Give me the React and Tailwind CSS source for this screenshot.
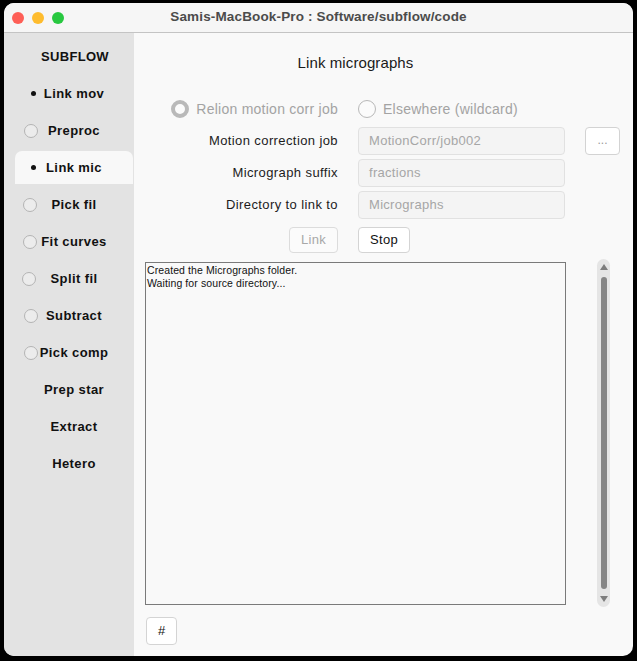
import React from "react";

const items = [
  { label: "Link mov", ind: "dot" },
  { label: "Preproc", ind: "circle" },
  { label: "Link mic", ind: "dot", active: true },
  { label: "Pick fil", ind: "circle", off: -1 },
  { label: "Fit curves", ind: "circle", off: -1 },
  { label: "Split fil", ind: "circle", off: -2 },
  { label: "Subtract", ind: "circle" },
  { label: "Pick comp", ind: "circle" },
  { label: "Prep star" },
  { label: "Extract" },
  { label: "Hetero" },
];

function Indicator({ ind, off }) {
  if (ind === "dot")
    return <span className="ml-[16px] block w-[5px] h-[5px] rounded-full bg-[#111]" />;
  if (ind === "circle")
    return (
      <span
        className={
          "block w-[14px] h-[14px] rounded-full border border-[#b4b4b4] bg-[#ececec] " +
          (off === -1 ? "ml-[8px]" : off === -2 ? "ml-[7px]" : "ml-[9px]")
        }
      />
    );
  return null;
}

export default function App() {
  const font = { fontFamily: '"Liberation Sans", Arial, sans-serif' };
  return (
    <div className="w-[637px] h-[661px] bg-black pt-[3px] pl-[4px] pr-[4px] pb-[5px]" style={font}>
      <div className="w-full h-full rounded-[10px] overflow-hidden flex flex-col bg-[#f9f9f9]">
        {/* title bar */}
        <div className="h-[30px] shrink-0 bg-[#f6f6f6] border-b border-[#c4c4c4] flex items-center">
          <div className="flex items-center gap-[8px] pl-[8px] w-[60px]">
            <span className="w-[12px] h-[12px] rounded-full bg-[#fe5f57]" />
            <span className="w-[12px] h-[12px] rounded-full bg-[#febc2e]" />
            <span className="w-[12px] h-[12px] rounded-full bg-[#28c840]" />
          </div>
          <div className="flex-1 text-center text-[13.5px] tracking-[0.15px] font-bold text-[#4b4b4b] pr-[60px]">
            Samis-MacBook-Pro : Software/subflow/code
          </div>
        </div>

        <div className="flex flex-1 min-h-0">
          {/* sidebar */}
          <div className="w-[130px] shrink-0 bg-[#e3e3e3] pt-[7px] pl-[11px] flex flex-col gap-[4px]">
            <div className="w-[118px] h-[33px] flex items-center justify-center text-[13px] tracking-[0.3px] font-bold text-[#111] pl-[2px]">
              SUBFLOW
            </div>
            {items.map((it) => (
              <div
                key={it.label}
                className={
                  "w-[118px] h-[33px] grid grid-cols-[24px_1fr_24px] items-center " +
                  (it.active ? "bg-[#f8f8f8] rounded-t-[7px]" : "")
                }
              >
                <div className="flex items-center">
                  <Indicator ind={it.ind} off={it.off} />
                </div>
                <div className="text-center text-[13px] tracking-[0.4px] font-bold text-[#111] whitespace-nowrap">
                  {it.label}
                </div>
                <div />
              </div>
            ))}
          </div>

          {/* main */}
          <div className="flex-1 flex flex-col pt-[20px]">
            <div className="w-[443px] text-center text-[15px] tracking-[0.1px] leading-[20px] text-[#1a1a1a]">
              Link micrographs
            </div>

            <div className="grid grid-cols-[204px_207px_35px] gap-x-[20px] mt-[27px]">
              {/* radio row */}
              <div className="flex items-center justify-end h-[18px] gap-[7px]">
                <span className="w-[18px] h-[18px] rounded-full border-[4px] border-[#b9b9b9] bg-[#fbfbfb]" />
                <span className="text-[14px] tracking-[0.25px] text-[#a3a3a3] whitespace-nowrap">Relion motion corr job</span>
              </div>
              <div className="flex items-center h-[18px] gap-[7px]">
                <span className="w-[18px] h-[18px] rounded-full border border-[#b8b8b8] bg-[#fbfbfb]" />
                <span className="text-[14px] tracking-[0.25px] text-[#a3a3a3] whitespace-nowrap">Elsewhere (wildcard)</span>
              </div>
              <div />

              {/* inputs */}
              <div className="mt-[9px] h-[28px] flex items-center justify-end text-[13px] tracking-[0.4px] text-[#1c1c1c] whitespace-nowrap">
                Motion correction job
              </div>
              <div className="mt-[9px] h-[28px] rounded-[4px] border border-[#e1e1e1] bg-[#f4f4f4] flex items-center pl-[10px] text-[13px] tracking-[0.3px] text-[#a6a6a6]">
                MotionCorr/job002
              </div>
              <div className="mt-[9px] h-[28px] rounded-[4px] border border-[#d3d3d3] bg-white flex items-center justify-center text-[12px] text-[#9a9a9a] pb-[3px]">
                ...
              </div>

              <div className="mt-[4px] h-[28px] flex items-center justify-end text-[13px] tracking-[0.4px] text-[#1c1c1c] whitespace-nowrap">
                Micrograph suffix
              </div>
              <div className="mt-[4px] h-[28px] rounded-[4px] border border-[#e1e1e1] bg-[#f4f4f4] flex items-center pl-[10px] text-[13px] tracking-[0.3px] text-[#a6a6a6]">
                fractions
              </div>
              <div />

              <div className="mt-[4px] h-[28px] flex items-center justify-end text-[13px] tracking-[0.4px] text-[#1c1c1c] whitespace-nowrap">
                Directory to link to
              </div>
              <div className="mt-[4px] h-[28px] rounded-[4px] border border-[#e1e1e1] bg-[#f4f4f4] flex items-center pl-[10px] text-[13px] tracking-[0.3px] text-[#a6a6a6]">
                Micrographs
              </div>
              <div />

              {/* buttons */}
              <div className="mt-[8px] h-[26px] flex justify-end">
                <div className="w-[49px] h-[26px] rounded-[4px] border border-[#dcdcdc] bg-[#fbfbfb] flex items-center justify-center text-[13px] tracking-[0.3px] text-[#a8a8a8]">
                  Link
                </div>
              </div>
              <div className="mt-[8px] h-[26px] flex">
                <div className="w-[52px] h-[26px] rounded-[4px] border border-[#d4d4d4] bg-white flex items-center justify-center text-[13px] tracking-[0.3px] text-[#111]">
                  Stop
                </div>
              </div>
              <div />
            </div>

            {/* log area */}
            <div className="flex mt-[9px] pl-[11px]">
              <div className="w-[421px] h-[343px] border border-[#7a7a7a] bg-[#f9f9f9] px-[1px] pt-[1px] text-[10.5px] tracking-[0.1px] leading-[13px] text-[#111]">
                <div>Created the Micrographs folder.</div>
                <div>Waiting for source directory...</div>
              </div>
              <div className="ml-[31px] mt-[-3px] w-[13px] h-[348px] rounded-full bg-[#e5e5e5] flex flex-col items-center pt-[5px] pb-[5px]">
                <svg width="8" height="6" viewBox="0 0 8 6">
                  <polygon points="4,0 8,6 0,6" fill="#7d7d7d" />
                </svg>
                <div className="mt-[7px] w-[6px] flex-1 rounded-full bg-[#868686]" />
                <svg className="mt-[7px]" width="8" height="6" viewBox="0 0 8 6">
                  <polygon points="0,0 8,0 4,6" fill="#7d7d7d" />
                </svg>
              </div>
            </div>

            <div className="mt-[10px] ml-[12px] w-[31px] h-[28px] rounded-[4px] border border-[#d4d4d4] bg-white flex items-center justify-center text-[13px] text-[#111]">
              #
            </div>
          </div>
        </div>
      </div>
    </div>
  );
}
